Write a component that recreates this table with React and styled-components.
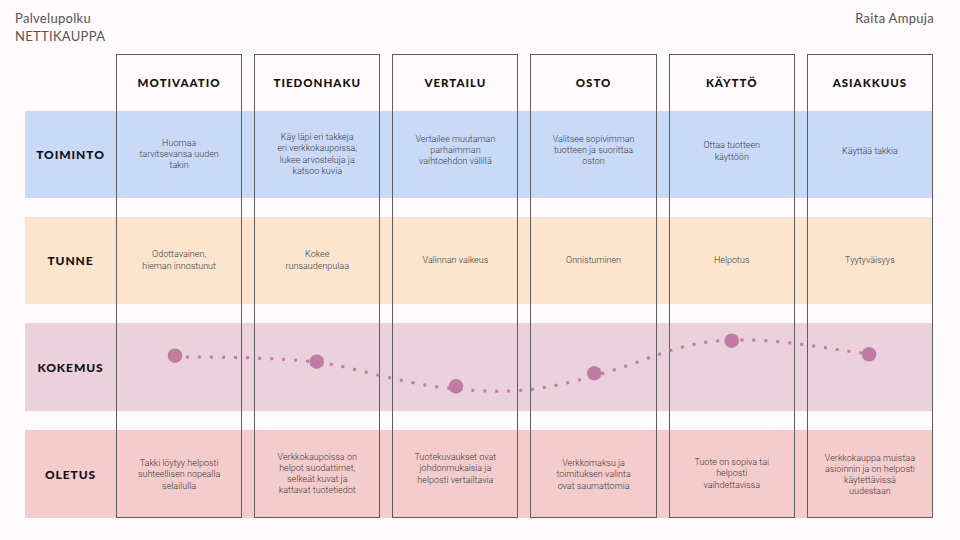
import React from "react";
import styled, { createGlobalStyle } from "styled-components";

const GlobalStyle = createGlobalStyle`
  html, body { margin: 0; padding: 0; background: #fffafb; }
  * { box-sizing: border-box; }
`;

const Page = styled.div`
  width: 960px; height: 540px; padding: 9px 26px 0 15px;
  font-family: Lato, "Open Sans", sans-serif; color: #111;
`;

const TopBar = styled.div`
  display: flex; justify-content: space-between; align-items: flex-start;
  font-size: 13px; line-height: 18px; color: #555; letter-spacing: 0.3px;
`;

const Board = styled.div`
  display: grid; width: 908px; margin: 9px 0 0 10px;
  grid-template-columns: 79px repeat(6, 1fr);
  grid-template-rows: 57px 87px 19px 87px 19px 88px 19px 88px;
  column-gap: 12px;
`;

const Band = styled.div`
  grid-row: ${(p) => p.$row}; grid-column: 1 / -1;
  background: ${(p) => p.$bg};
`;

const StageBox = styled.div`
  grid-row: 1 / -1; grid-column: ${(p) => p.$col};
  border: 1px solid #5e5e5e;
`;

const Heading = styled.div`
  grid-row: 1; grid-column: ${(p) => p.$col};
  display: flex; align-items: center; justify-content: center;
  font-weight: 900; font-size: 11.5px; letter-spacing: 1px;
`;

const RowLabel = styled.div`
  grid-row: ${(p) => p.$row}; grid-column: 1;
  margin-right: -12px;
  display: flex; align-items: center; justify-content: center;
  font-weight: 900; font-size: 12px; letter-spacing: 0.9px;
`;

const Cell = styled.div`
  grid-row: ${(p) => p.$row}; grid-column: ${(p) => p.$col};
  display: flex; align-items: center; justify-content: center;
  padding: 0 8px;
  transform: translateY(${(p) => p.$dy || 0}px);
  font-family: Roboto, "Liberation Sans", sans-serif; font-weight: 300;
  font-size: 9px; line-height: 11.2px; color: #3a3a3a;
  text-align: center; white-space: pre-line;
`;

const Curve = styled.svg`
  grid-row: 6; grid-column: 1 / -1;
  width: 908px; height: 88px; display: block;
`;

const stages = ["MOTIVAATIO", "TIEDONHAKU", "VERTAILU", "OSTO", "KÄYTTÖ", "ASIAKKUUS"];

const rows = [
  {
    label: "TOIMINTO", bg: "#c9daf8", row: 2,
    dy: [0, 0, -4, -4, -3, -3],
    cells: [
      "Huomaa\ntarvitsevansa uuden\ntakin",
      "Käy läpi eri takkeja\neri verkkokaupoissa,\nlukee arvosteluja ja\nkatsoo kuvia",
      "Vertailee muutaman\nparhaimman\nvaihtoehdon välillä",
      "Valitsee sopivimman\ntuotteen ja suorittaa\noston",
      "Ottaa tuotteen\nkäyttöön",
      "Käyttää takkia",
    ],
  },
  {
    label: "TUNNE", bg: "#fce5cd", row: 4,
    dy: [0, 0, 0, 0, 0, 0],
    cells: [
      "Odottavainen,\nhieman innostunut",
      "Kokee\nrunsaudenpulaa",
      "Valinnan vaikeus",
      "Onnistuminen",
      "Helpotus",
      "Tyytyväisyys",
    ],
  },
  { label: "KOKEMUS", bg: "#ead1dc", row: 6, cells: [] },
  {
    label: "OLETUS", bg: "#f4cccc", row: 8,
    dy: [1, 0, -5, 1, 0, 1],
    cells: [
      "Takki löytyy helposti\nsuhteellisen nopealla\nselailulla",
      "Verkkokaupoissa on\nhelpot suodattimet,\nselkeät kuvat ja\nkattavat tuotetiedot",
      "Tuotekuvaukset ovat\njohdonmukaisia ja\nhelposti vertailtavia",
      "Verkkomaksu ja\ntoimituksen valinta\novat saumattomia",
      "Tuote on sopiva tai\nhelposti\nvaihdettavissa",
      "Verkkokauppa muistaa\nasioinnin ja on helposti\nkäytettävissä\nuudestaan",
    ],
  },
];

const points = [
  [175, 355.7], [316.7, 361.7], [456, 386.3], [594.3, 373.3], [731.7, 340.7], [869, 354.3],
];

const App = () => {
  return (
    <Page>
      <GlobalStyle />
      <TopBar>
        <div>
          <div>Palvelupolku</div>
          <div>NETTIKAUPPA</div>
        </div>
        <div>Raita Ampuja</div>
      </TopBar>
      <Board>
        {rows.map((r) => (
          <Band key={r.label} $row={r.row} $bg={r.bg} />
        ))}
        {stages.map((s, i) => (
          <StageBox key={s} $col={i + 2} />
        ))}
        {stages.map((s, i) => (
          <Heading key={s} $col={i + 2}>{s}</Heading>
        ))}
        {rows.map((r) => (
          <RowLabel key={r.label} $row={r.row}>{r.label}</RowLabel>
        ))}
        {rows.map((r) =>
          r.cells.map((text, i) => (
            <Cell key={r.label + i} $row={r.row} $col={i + 2} $dy={r.dy[i]}>
              {text}
            </Cell>
          ))
        )}
        <Curve viewBox="25 323 908 88">
          <path
            d="M186,357 C230,357 280,358 316,362 S400,384 456,389 S540,391 594,376 S680,341 732,340 S820,348 862,353"
            fill="none"
            stroke="#c27ba0"
            strokeWidth="3"
            strokeDasharray="3 9"
          />
          {points.map(([x, y]) => (
            <circle key={x} cx={x} cy={y} r="7.3" fill="#c27ba0" />
          ))}
        </Curve>
      </Board>
    </Page>
  );
};

export default App;
